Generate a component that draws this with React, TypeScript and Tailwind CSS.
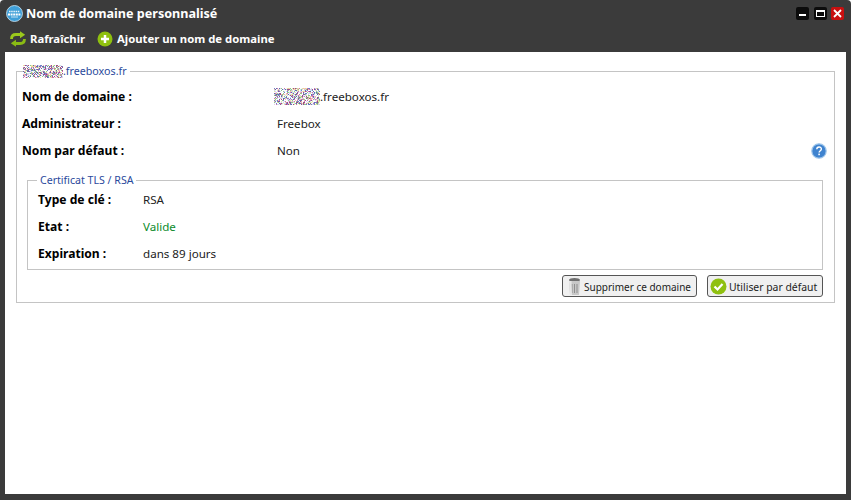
import type { ReactNode } from 'react'

const FONT = "font-['Noto_Sans',sans-serif]"

// Scrambled patch hiding the sub-domain in the screenshot
function Noise({ w, h, seed }: { w: number; h: number; seed: number }) {
  const colors = ['#d070b0', '#7080c8', '#90c888', '#d8d0f0', '#f0b8b0', '#606ca8', '#c8e0f0', '#ffffff', '#ffffff', '#ffffff', '#f4f4f4', '#985088', '#e8e8a0']
  const cells = []
  let s = seed
  for (let y = 0; y < h; y += 1) {
    for (let x = 0; x < w; x += 1) {
      s = (s * 1103515245 + 12345) & 0x7fffffff
      cells.push(<rect key={`${x}-${y}`} x={x} y={y} width={1} height={1} fill={colors[(s >> 16) % colors.length]} />)
    }
  }
  return (
    <svg width={w} height={h} className="inline-block shrink-0" shapeRendering="crispEdges">
      {cells}
    </svg>
  )
}

function Row({ label, labelWidth, children }: { label: string; labelWidth: string; children: ReactNode }) {
  return (
    <div className="flex h-[27px] items-center">
      <div className={`${labelWidth} whitespace-nowrap text-[12.1px] leading-[17px] font-bold text-black`}>{label}</div>
      <div className="flex items-center whitespace-nowrap text-[11.6px] leading-[17px] text-[#222]">{children}</div>
    </div>
  )
}

function WinButton({ children, red }: { children: ReactNode; red?: boolean }) {
  return (
    <div className={`flex size-[13px] items-center justify-center rounded-[2px] ${red ? 'bg-[#c81010]' : 'bg-[#0c0c0c]'}`}>
      {children}
    </div>
  )
}

export default function App() {
  return (
    <div className={`${FONT} flex h-[500px] w-[851px] flex-col overflow-hidden rounded-t-[4px] bg-[#3b3b3b] px-[5px] pb-[6px]`}>
      {/* Title bar */}
      <div className="flex h-[27px] shrink-0 items-center">
        <svg width="17" height="17" viewBox="0 0 17 17" className="ml-px">
          <circle cx="8.5" cy="8.5" r="8" fill="#3f9fd8" stroke="#cfe6f2" strokeWidth="0.8" />
          <path d="M3 6.500h11" stroke="#e8f4fb" strokeWidth="1.500" strokeDasharray="1.500 0.700" />
          <path d="M2 9.500h13" stroke="#ffffff" strokeWidth="2" strokeDasharray="2 0.600" />
          <path d="M5 12h7" stroke="#bfe0f2" strokeWidth="1" />
        </svg>
        <span className="ml-[3px] text-[12.6px] leading-[19px] font-bold text-white">Nom de domaine personnalisé</span>
        <div className="mr-[2px] ml-auto flex gap-[4.5px]">
          <WinButton>
            <div className="mt-[3px] h-[2px] w-[7px] bg-white" />
          </WinButton>
          <WinButton>
            <div className="h-[7px] w-[9px] border border-t-2 border-white" />
          </WinButton>
          <WinButton red>
            <svg width="11" height="11" viewBox="0 0 11 11">
              <path d="M2 2l7 7M9 2l-7 7" stroke="#fff" strokeWidth="1.8" />
            </svg>
          </WinButton>
        </div>
      </div>

      {/* Toolbar */}
      <div className="flex h-[25px] shrink-0 items-center text-[11.3px] font-bold text-white">
        <svg width="16" height="16" viewBox="0 0 16 16" className="ml-[5px] mb-[2px] shrink-0">
          <path d="M1.500 8C1.500 4.500 3.500 3.500 6 3.500h4.500" fill="none" stroke="#9bc81c" strokeWidth="2.800" />
          <path d="M10 .3L15.200 3.800 10 7.300z" fill="#9bc81c" />
          <path d="M14.500 8c0 3.500-2 4.500-4.500 4.500H5.500" fill="none" stroke="#8abb14" strokeWidth="2.800" />
          <path d="M6 8.700L.8 12.200 6 15.700z" fill="#8abb14" />
        </svg>
        <span className="ml-[4px] w-[55px]">Rafraîchir</span>
        <svg width="16" height="16" viewBox="0 0 16 16" className="ml-[12px] mb-[2px] shrink-0">
          <circle cx="8" cy="8" r="7.500" fill="#8fc00f" />
          <path d="M8 4v8M4 8h8" stroke="#fff" strokeWidth="2.500" />
        </svg>
        <span className="ml-[4px]">Ajouter un nom de domaine</span>
      </div>

      {/* Content */}
      <div className="min-h-0 flex-1 bg-white px-[11px] pt-[12px]">
        <fieldset className="h-[239px] border border-[#c4c4c4] px-[5px]">
          <legend className="ml-[1px] flex items-center pr-[3px] text-[10.7px] leading-[14px] text-[#2a4a9c]">
            <Noise w={40} h={13} seed={7} />
            <span>.freeboxos.fr</span>
          </legend>
          <div className="mt-[5px]">
            <Row label="Nom de domaine :" labelWidth="w-[252px]">
              <Noise w={46} h={17} seed={23} />
              <span>.freeboxos.fr</span>
            </Row>
            <Row label="Administrateur :" labelWidth="w-[255px]">Freebox</Row>
            <div className="relative">
              <Row label="Nom par défaut :" labelWidth="w-[255px]">Non</Row>
              {/* Help bubble */}
              <svg width="16" height="16" viewBox="0 0 16 16" className="absolute top-[6px] right-[2px]">
                <circle cx="8" cy="8" r="7.200" fill="#3f83cf" stroke="#9cc4ea" strokeWidth="1.200" />
                <path d="M5.800 6.300c0-3 4.600-3 4.600-.2 0 1.700-2.300 1.700-2.300 3.500" fill="none" stroke="#fff" strokeWidth="1.400" />
                <rect x="7.300" y="10.600" width="1.600" height="1.600" fill="#fff" />
              </svg>
            </div>
          </div>

          <fieldset className="mt-[9px] ml-[5px] mr-[6px] h-[97px] border border-[#c4c4c4] pl-[10px]">
            <legend className="-ml-px px-[3px] text-[10.6px] leading-[14px] text-[#2a4a9c]">Certificat TLS / RSA</legend>
            <div className="-mt-px">
              <Row label="Type de clé :" labelWidth="w-[105px]">RSA</Row>
              <Row label="Etat :" labelWidth="w-[105px]">
                <span className="text-[#0a8a2a]">Valide</span>
              </Row>
              <Row label="Expiration :" labelWidth="w-[105px]">dans 89 jours</Row>
            </div>
          </fieldset>

          <div className="mt-[5px] mr-[6px] flex justify-end gap-[10px] whitespace-nowrap text-[#222]">
            <button className="flex h-[22px] w-[135px] items-center rounded-[3px] border border-[#555] bg-[#f0f0f0] pl-[4px] text-[10px] leading-[16px]">
              <svg width="15" height="19" viewBox="0 0 15 19" className="shrink-0">
                <ellipse cx="7.500" cy="3" rx="5.500" ry="2" fill="#6f6f6f" />
                <path d="M2 4l1 14h9l1-14z" fill="#c8c8c8" />
                <path d="M5 7v9M7.500 7v9M10 7v9" stroke="#8f8f8f" />
                <path d="M2 4l1 14h2L4.500 4z" fill="#e6e6e6" />
              </svg>
              <span className="mt-px ml-[2px]">Supprimer ce domaine</span>
            </button>
            <button className="flex h-[22px] w-[116px] items-center rounded-[3px] border border-[#555] bg-[#f0f0f0] pl-[2px] text-[10.4px] leading-[16px]">
              <svg width="17" height="17" viewBox="0 0 17 17" className="shrink-0">
                <circle cx="8.500" cy="8.500" r="8" fill="#8fc00f" />
                <path d="M4.500 8.500l3 3 5-5.500" fill="none" stroke="#fff" strokeWidth="2.200" />
              </svg>
              <span className="mt-px ml-[2px]">Utiliser par défaut</span>
            </button>
          </div>
        </fieldset>
      </div>
    </div>
  )
}
